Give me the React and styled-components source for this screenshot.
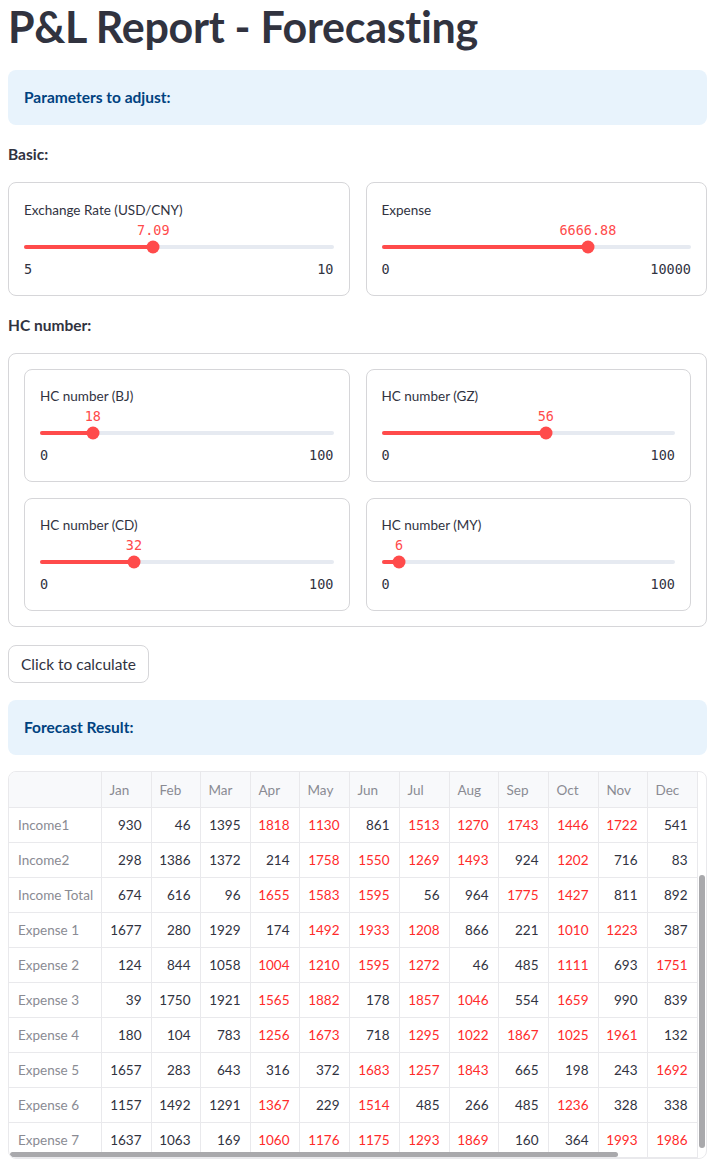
import React from 'react';
import styled, { createGlobalStyle } from 'styled-components';

const GlobalStyle = createGlobalStyle`
  body {
    margin: 0;
    background: #ffffff;
    color: #31333f;
    font-family: 'Lato', 'Noto Sans', sans-serif;
  }
`;

const Main = styled.div`
  width: 699px;
  padding: 0 21px 0 8px;
  display: flex;
  flex-direction: column;
  gap: 16px;
`;

const Title = styled.h1`
  margin: 0;
  font-size: 43px;
  line-height: 54px;
  font-weight: 700;
  letter-spacing: -0.3px;
  color: #31333f;
`;

const InfoBox = styled.div`
  background: #e8f3fc;
  border-radius: 8px;
  padding: 16px;
  color: #004280;
  font-size: 15.5px;
  font-weight: 700;
  line-height: 23px;
`;

const SectionLabel = styled.div`
  font-size: 15.5px;
  font-weight: 700;
  line-height: 24px;
  margin-top: 1px;
`;

const Grid = styled.div`
  display: grid;
  grid-template-columns: 1fr 1fr;
  gap: 16px;
`;

const Bordered = styled.div`
  border: 1px solid #d6d6d9;
  border-radius: 8px;
  padding: ${(p) => (p.$tight ? '14px 15px 15px' : '15px')};
`;

const SliderLabel = styled.div`
  font-size: 13.5px;
  line-height: 24px;
  color: #31333f;
`;

const ValueRow = styled.div`
  position: relative;
  height: 16px;
`;

const ThumbValue = styled.span`
  position: absolute;
  top: 0;
  transform: translateX(-50%);
  font-family: 'DejaVu Sans Mono', 'Liberation Mono', monospace;
  font-size: 13.5px;
  line-height: 16px;
  color: #ff4b4b;
  white-space: nowrap;
`;

const TrackRow = styled.div`
  position: relative;
  height: 18px;
  display: flex;
  align-items: center;
`;

const Track = styled.div`
  position: relative;
  width: 100%;
  height: 4px;
  border-radius: 2px;
  background: #e6eaf1;
`;

const Fill = styled.div`
  height: 100%;
  border-radius: 2px;
  background: #ff4b4b;
`;

const Thumb = styled.div`
  position: absolute;
  top: 50%;
  width: 13px;
  height: 13px;
  border-radius: 50%;
  background: #ff4b4b;
  transform: translate(-50%, -50%);
`;

const Ticks = styled.div`
  margin-top: 2px;
  display: flex;
  justify-content: space-between;
  font-family: 'DejaVu Sans Mono', 'Liberation Mono', monospace;
  font-size: 13.5px;
  line-height: 22px;
  color: #31333f;
`;

const Button = styled.button`
  align-self: flex-start;
  height: 38px;
  padding: 0 12px;
  margin: 2px 0 1px;
  background: #ffffff;
  border: 1px solid #d6d6d9;
  border-radius: 8px;
  font-family: inherit;
  font-size: 15.5px;
  color: #31333f;
`;

const TableFrame = styled.div`
  position: relative;
  height: 386px;
  border: 1px solid #e9e9ec;
  border-radius: 8px;
  overflow: hidden;
`;

const Table = styled.table`
  border-collapse: collapse;
  table-layout: fixed;
  width: 688px;
  font-size: 13.5px;
`;

const HeadCell = styled.th`
  height: 35px;
  padding: 0 8px;
  background: #f8f9fb;
  border-right: 1px solid #e9e9ec;
  border-bottom: 1px solid #e9e9ec;
  text-align: left;
  font-weight: 400;
  color: #8a8b93;
`;

const IndexCell = styled.td`
  height: 34px;
  padding: 0 9px;
  border-right: 1px solid #e9e9ec;
  border-bottom: 1px solid #e9e9ec;
  color: #8a8b93;
  white-space: nowrap;
`;

const NumCell = styled.td`
  height: 34px;
  padding: 0 9px 0 0;
  border-right: 1px solid #e9e9ec;
  border-bottom: 1px solid #e9e9ec;
  text-align: right;
  color: ${(p) => (p.$hot ? '#ff2b2b' : '#31333f')};
`;

const ScrollThumb = styled.div`
  position: absolute;
  background: #a9a9ac;
  border-radius: 3px;
  ${(p) =>
    p.$vertical
      ? 'right: 1px; top: 103px; width: 6px; height: 273px;'
      : 'left: 1px; bottom: 1px; height: 5px; width: 608px;'}
`;

function Slider({ label, min, max, value, display }) {
  const pct = ((value - min) / (max - min)) * 100;
  return (
    <div>
      <SliderLabel>{label}</SliderLabel>
      <ValueRow>
        <ThumbValue style={{ left: `${pct}%` }}>{display ?? value}</ThumbValue>
      </ValueRow>
      <TrackRow>
        <Track>
          <Fill style={{ width: `${pct}%` }} />
          <Thumb style={{ left: `${pct}%` }} />
        </Track>
      </TrackRow>
      <Ticks>
        <span>{min}</span>
        <span>{max}</span>
      </Ticks>
    </div>
  );
}

const months = ['Jan', 'Feb', 'Mar', 'Apr', 'May', 'Jun', 'Jul', 'Aug', 'Sep', 'Oct', 'Nov', 'Dec'];
const widths = [50, 49, 50, 49, 50, 50, 50, 49, 50, 50, 49, 50];

const rows = [
  ['Income1', [930, 46, 1395, 1818, 1130, 861, 1513, 1270, 1743, 1446, 1722, 541]],
  ['Income2', [298, 1386, 1372, 214, 1758, 1550, 1269, 1493, 924, 1202, 716, 83]],
  ['Income Total', [674, 616, 96, 1655, 1583, 1595, 56, 964, 1775, 1427, 811, 892]],
  ['Expense 1', [1677, 280, 1929, 174, 1492, 1933, 1208, 866, 221, 1010, 1223, 387]],
  ['Expense 2', [124, 844, 1058, 1004, 1210, 1595, 1272, 46, 485, 1111, 693, 1751]],
  ['Expense 3', [39, 1750, 1921, 1565, 1882, 178, 1857, 1046, 554, 1659, 990, 839]],
  ['Expense 4', [180, 104, 783, 1256, 1673, 718, 1295, 1022, 1867, 1025, 1961, 132]],
  ['Expense 5', [1657, 283, 643, 316, 372, 1683, 1257, 1843, 665, 198, 243, 1692]],
  ['Expense 6', [1157, 1492, 1291, 1367, 229, 1514, 485, 266, 485, 1236, 328, 338]],
  ['Expense 7', [1637, 1063, 169, 1060, 1176, 1175, 1293, 1869, 160, 364, 1993, 1986]],
];

export default function App() {
  return (
    <>
      <GlobalStyle />
      <Main>
        <Title>P&amp;L Report - Forecasting</Title>
        <InfoBox>Parameters to adjust:</InfoBox>

        <SectionLabel>Basic:</SectionLabel>
        <Grid>
          <Bordered>
            <Slider label="Exchange Rate (USD/CNY)" min={5} max={10} value={7.09} display="7.09" />
          </Bordered>
          <Bordered>
            <Slider label="Expense" min={0} max={10000} value={6666.88} display="6666.88" />
          </Bordered>
        </Grid>

        <SectionLabel>HC number:</SectionLabel>
        <Bordered>
          <Grid>
            <Bordered $tight>
              <Slider label="HC number (BJ)" min={0} max={100} value={18} />
            </Bordered>
            <Bordered $tight>
              <Slider label="HC number (GZ)" min={0} max={100} value={56} />
            </Bordered>
            <Bordered $tight>
              <Slider label="HC number (CD)" min={0} max={100} value={32} />
            </Bordered>
            <Bordered $tight>
              <Slider label="HC number (MY)" min={0} max={100} value={6} />
            </Bordered>
          </Grid>
        </Bordered>

        <Button>Click to calculate</Button>
        <InfoBox>Forecast Result:</InfoBox>

        <TableFrame>
          <Table>
            <colgroup>
              <col style={{ width: 92 }} />
              {widths.map((w, i) => (
                <col key={i} style={{ width: w }} />
              ))}
            </colgroup>
            <thead>
              <tr>
                <HeadCell />
                {months.map((m) => (
                  <HeadCell key={m}>{m}</HeadCell>
                ))}
              </tr>
            </thead>
            <tbody>
              {rows.map(([name, values]) => (
                <tr key={name}>
                  <IndexCell>{name}</IndexCell>
                  {values.map((v, i) => (
                    <NumCell key={i} $hot={i >= 3 && v > 1000}>
                      {v}
                    </NumCell>
                  ))}
                </tr>
              ))}
            </tbody>
          </Table>
          <ScrollThumb $vertical />
          <ScrollThumb />
        </TableFrame>
      </Main>
    </>
  );
}
